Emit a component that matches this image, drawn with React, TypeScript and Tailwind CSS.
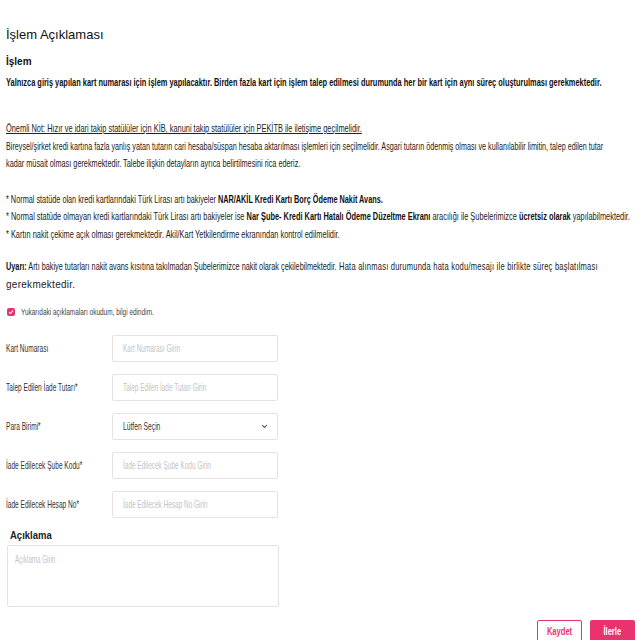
import React from "react";

const font = { fontFamily: '"Liberation Sans", Arial, sans-serif' };

function Line({ sc, className, children }: { sc: string; className?: string; children: React.ReactNode }) {
  return <div className={`origin-left whitespace-nowrap ${sc} ${className ?? ""}`}>{children}</div>;
}

function Row({ label, placeholder, select }: { label: string; placeholder: string; select?: boolean }) {
  return (
    <div className="flex items-center h-[27px]">
      <div className="w-[106px] shrink-0 text-[10.5px] text-[#333]">
        <Line sc="scale-x-[0.625]">{label}</Line>
      </div>
      {select ? (
        <div className="w-[166px] h-[27px] border border-[#e3e3e3] rounded-[2px] flex items-center justify-between pl-[10px] pr-[9px] text-[10.5px] text-[#333]">
          <Line sc="scale-x-[0.64]">Lütfen Seçin</Line>
          <svg width="7" height="5" viewBox="0 0 7 5"><path d="M1.2 1.2l2.3 2.3 2.3-2.3" fill="none" stroke="#555" strokeWidth="1.1" /></svg>
        </div>
      ) : (
        <div className="w-[166px] h-[27px] border border-[#e3e3e3] rounded-[2px] flex items-center px-[10px] text-[10.5px] text-[#c4c4c4]">
          <Line sc="scale-x-[0.615]">{placeholder}</Line>
        </div>
      )}
    </div>
  );
}

export default function App() {
  return (
    <div className="w-[640px] h-[640px] bg-white text-[#111] overflow-hidden" style={font}>
      <div className="pl-[6px] pt-[26px]">
        <div className="text-[13px] leading-[18px] text-[#111]">İşlem Açıklaması</div>
        <div className="mt-[12px] text-[10px] leading-[12px] font-bold">İşlem</div>
        <Line sc="scale-x-[0.675]" className="mt-[7px] text-[11px] leading-[14px] font-bold">
          Yalnızca giriş yapılan kart numarası için işlem yapılacaktır. Birden fazla kart için işlem talep edilmesi durumunda her bir kart için aynı süreç oluşturulması gerekmektedir.
        </Line>
        <div className="mt-[31px] text-[10.5px] leading-[17.5px] text-[#222]">
          <Line sc="scale-x-[0.705]" className="underline">Önemli Not: Hızır ve idari takip statülüler için KİB, kanuni takip statülüler için PEKİTB ile iletişime geçilmelidir.</Line>
          <Line sc="scale-x-[0.685]">Bireysel/şirket kredi kartına fazla yanlış yatan tutarın cari hesaba/süspan hesaba aktarılması işlemleri için seçilmelidir. Asgari tutarın ödenmiş olması ve kullanılabilir limitin, talep edilen tutar</Line>
          <Line sc="scale-x-[0.695]">kadar müsait olması gerekmektedir. Talebe ilişkin detayların ayrıca belirtilmesini rica ederiz.</Line>
        </div>
        <div className="mt-[18px] text-[10.5px] leading-[17.5px] text-[#222]">
          <Line sc="scale-x-[0.695]">* Normal statüde olan kredi kartlarındaki Türk Lirası artı bakiyeler <b className="text-[#111]">NAR/AKİL Kredi Kartı Borç Ödeme Nakit Avans.</b></Line>
          <Line sc="scale-x-[0.705]">* Normal statüde olmayan kredi kartlarındaki Türk Lirası artı bakiyeler ise <b className="text-[#111]">Nar Şube- Kredi Kartı Hatalı Ödeme Düzeltme Ekranı</b> aracılığı ile Şubelerimizce <b className="text-[#111]">ücretsiz olarak</b> yapılabilmektedir.</Line>
          <Line sc="scale-x-[0.705]">* Kartın nakit çekime açık olması gerekmektedir. Akil/Kart Yetkilendirme ekranından kontrol edilmelidir.</Line>
        </div>
        <div className="mt-[15px] text-[10.5px] leading-[17.5px] text-[#222]">
          <div className="flex">
            <div className="w-[333px] shrink-0">
              <Line sc="scale-x-[0.695]"><b className="text-[#111]">Uyarı:</b> Artı bakiye tutarları nakit avans kısıtına takılmadan Şubelerimizce nakit olarak çekilebilmektedir.</Line>
            </div>
            <Line sc="scale-x-[0.72]" className="tracking-[0.3px]">Hata alınması durumunda hata kodu/mesajı ile birlikte süreç başlatılması</Line>
          </div>
          <Line sc="scale-x-[0.95]" className="tracking-[0.3px]">gerekmektedir.</Line>
        </div>
        <div className="mt-[13px] h-[12px] flex items-center pl-[1px]">
          <div className="w-[8px] h-[8px] rounded-[2px] bg-[#e8336f] flex items-center justify-center shrink-0">
            <svg width="6" height="6" viewBox="0 0 6 6"><path d="M1 3.1l1.4 1.4L5 1.6" fill="none" stroke="#fff" strokeWidth="1.1" /></svg>
          </div>
          <div className="ml-[6px] text-[9.5px] text-[#444]">
            <Line sc="scale-x-[0.68]">Yukarıdaki açıklamaları okudum, bilgi edindim.</Line>
          </div>
        </div>
        <div className="mt-[17px] flex flex-col gap-[12px]">
          <Row label="Kart Numarası" placeholder="Kart Numarası Girin" />
          <Row label="Talep Edilen İade Tutarı*" placeholder="Talep Edilen İade Tutarı Girin" />
          <Row label="Para Birimi*" placeholder="" select />
          <Row label="İade Edilecek Şube Kodu*" placeholder="İade Edilecek Şube Kodu Girin" />
          <Row label="İade Edilecek Hesap No*" placeholder="İade Edilecek Hesap No Girin" />
        </div>
        <div className="mt-[12px] pl-[4px] text-[10px] font-bold leading-[12px] text-[#222]">
          <Line sc="scale-x-[0.95]">Açıklama</Line>
        </div>
        <div className="mt-[3px] ml-[1px] w-[272px] h-[62px] border border-[#e3e3e3] rounded-[2px] px-[7px] py-[6px] text-[10.5px] text-[#c4c4c4]">
          <Line sc="scale-x-[0.59]">Açıklama Girin</Line>
        </div>
        <div className="mt-[13px] flex justify-end gap-[8px] pr-[5px]">
          <div className="w-[45px] h-[24px] border border-[#e8336f] rounded-[2px] text-[#e8336f] text-[10.5px] font-bold flex items-center justify-center">
            <span className="inline-block scale-x-[0.72]">Kaydet</span>
          </div>
          <div className="w-[45px] h-[24px] bg-[#e8336f] rounded-[2px] text-white text-[10.5px] font-bold flex items-center justify-center">
            <span className="inline-block scale-x-[0.72]">İlerle</span>
          </div>
        </div>
      </div>
    </div>
  );
}
